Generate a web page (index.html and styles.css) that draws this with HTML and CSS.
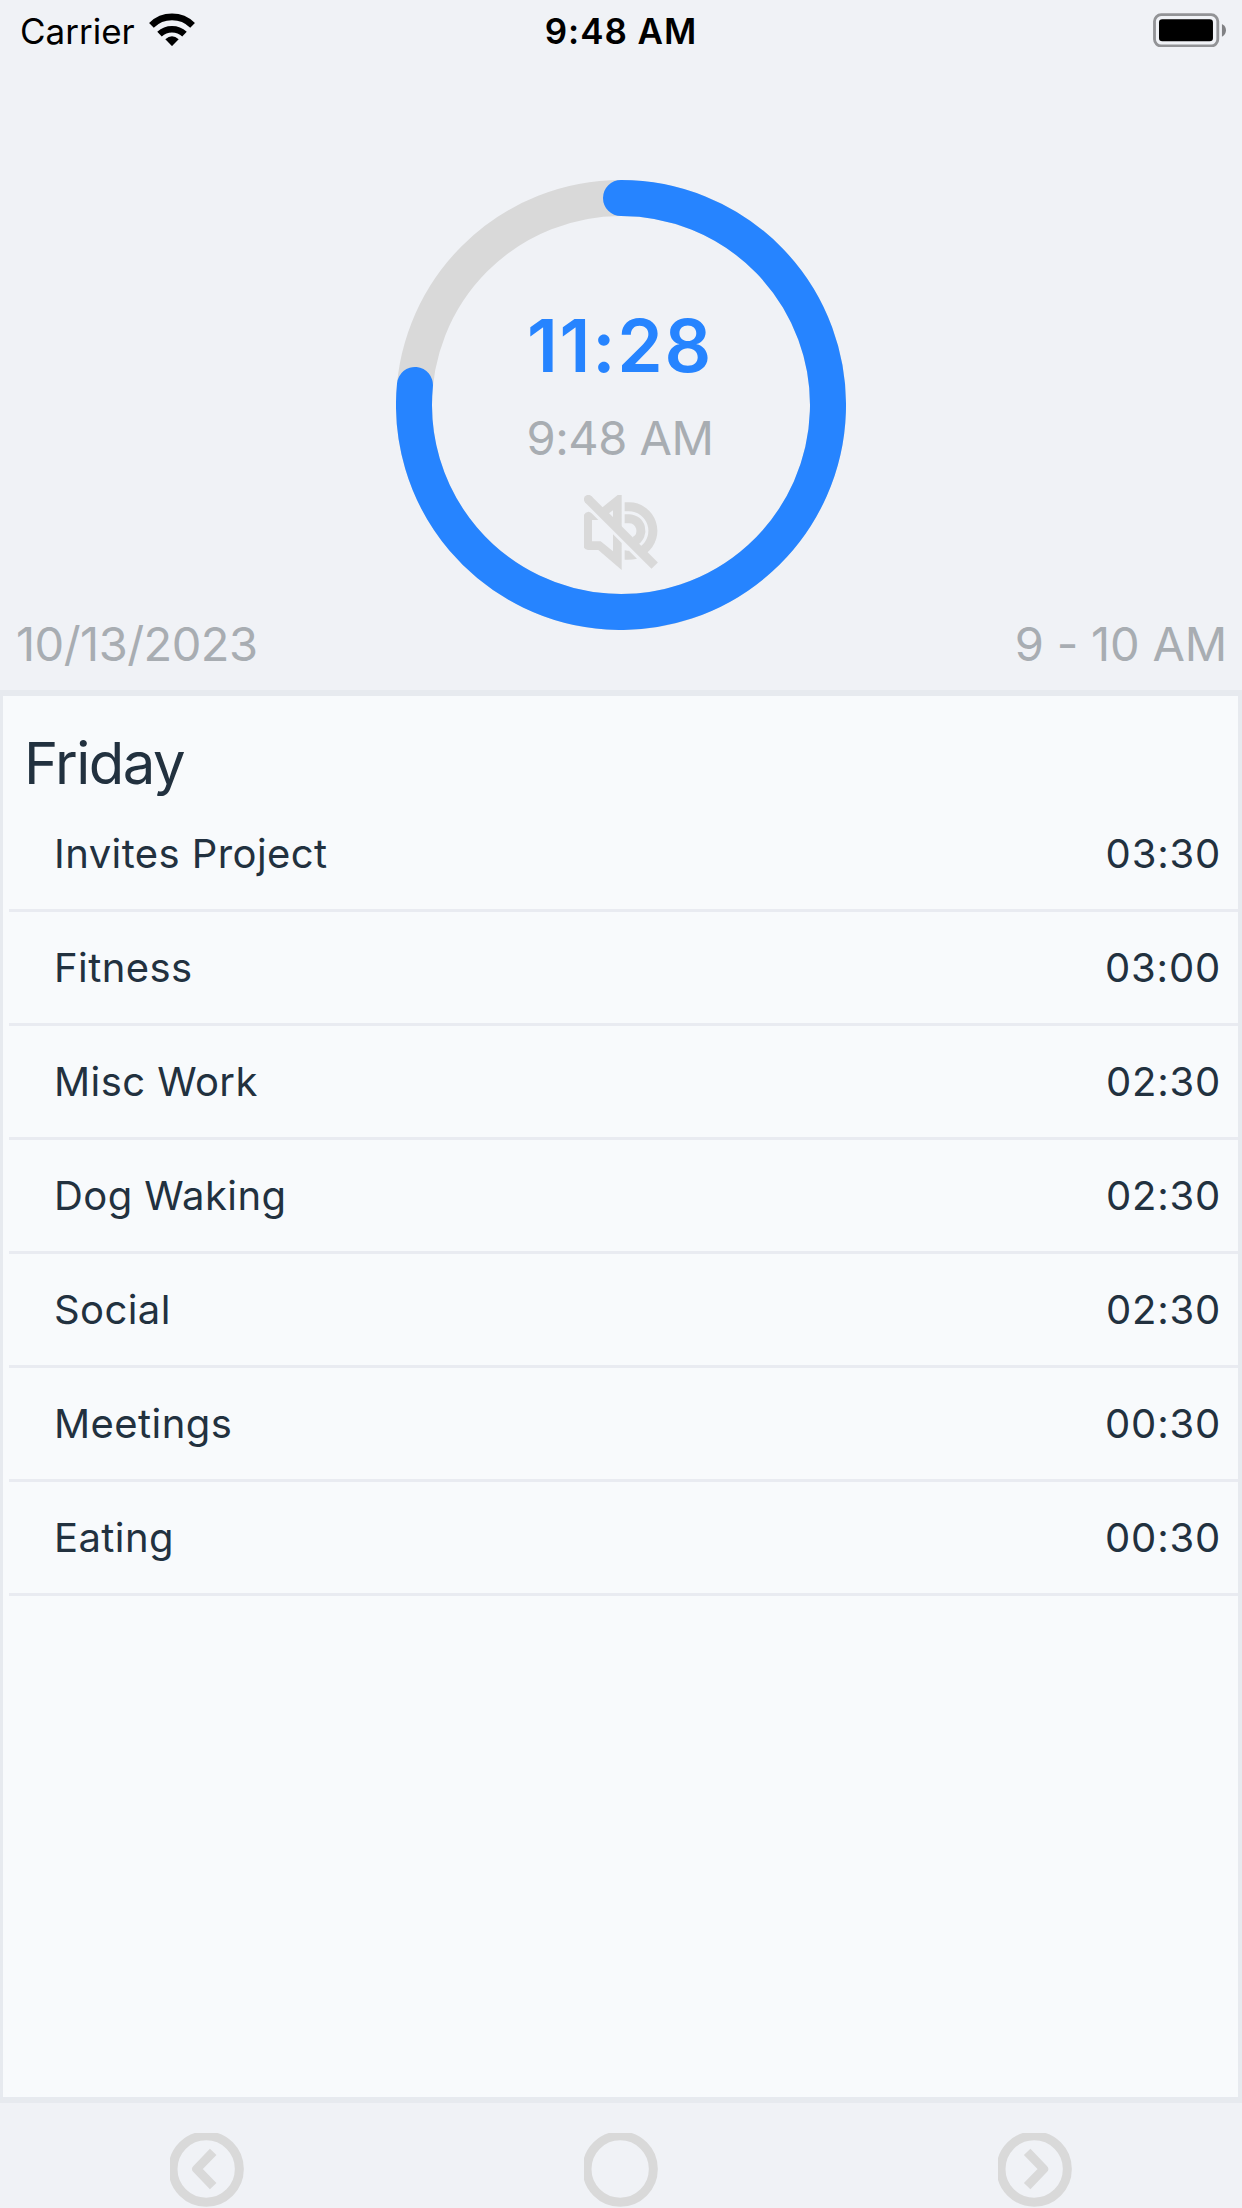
FILE: index.html
```
<!DOCTYPE html>
<html lang="en">
<head>
<meta charset="utf-8">
<title>Day Timer</title>
<link rel="stylesheet" href="styles.css">
</head>
<body>
<div class="app">
  <div class="status">
    <div class="status-left">
      <span class="carrier">Carrier</span>
      <svg class="wifi" viewBox="447 38 138 100" fill="none" stroke="#000" stroke-width="20">
        <path d="M454.200 75.200A88 88 0 0 1 577.800 75.200"/>
        <path d="M478.500 101.500A55.500 55.500 0 0 1 553.500 101.500"/>
        <path d="M496 117Q516 98 536 117L516 137.500Z" fill="#000" stroke="none"/>
      </svg>
    </div>
    <span class="status-time">9:48 AM</span>
    <div class="status-right">
      <svg class="battery" viewBox="69 38 220 104">
        <rect x="73.500" y="43" width="190" height="94" rx="20" fill="none" stroke="#929396" stroke-width="8.500"/>
        <rect x="87" y="57" width="162" height="66" rx="10" fill="#000"/>
        <path d="M276 71Q288 77 288 90T276 109Z" fill="#808184"/>
      </svg>
    </div>
  </div>

  <header class="summary">
    <div class="dial">
      <svg class="ring" viewBox="0 0 450 450" fill="none" stroke-width="36">
        <circle cx="225" cy="225" r="207" stroke="#d9d9d9"/>
        <path d="M225 18A207 207 0 1 1 18.970 205" stroke="#2684ff" stroke-linecap="round"/>
      </svg>
      <div class="dial-content">
        <div class="countdown">11:28</div>
        <div class="clock">9:48 AM</div>
        <svg class="mute" viewBox="612 1005 222 225">
          <path fill="#d9d9d9" fill-rule="evenodd" d="M660 1048L713 1005H725V1112L690 1090ZM687 1060L699 1051V1072Z"/>
          <path fill="#d9d9d9" d="M612 1064Q616 1056 625 1055Q631 1055 635 1060L655 1080H636V1144H662L699 1174V1123L725 1149V1230L655 1170H624Q616 1168 612 1163Z"/>
          <g fill="none" stroke="#d9d9d9" stroke-width="27">
            <path d="M734 1040.500H747A72 72 0 0 1 790.600 1169.500"/>
            <path d="M734 1076H747A36 36 0 0 1 765 1143"/>
            <path d="M625 1018L824 1217" stroke-linecap="butt"/>
          </g>
          <circle cx="625" cy="1018" r="13.500" fill="#d9d9d9"/>
          <path fill="#d9d9d9" d="M734 1171Q741 1173 747 1172L771 1196Q757 1200 734 1199Z"/>
        </svg>
      </div>
    </div>
    <div class="meta">
      <span class="date">10/13/2023</span>
      <span class="range">9 - 10 AM</span>
    </div>
  </header>

  <main class="log">
    <h1 class="day">Friday</h1>
    <ul class="entries">
      <li class="entry"><span>Invites Project</span><span class="time">03:30</span></li>
      <li class="entry"><span>Fitness</span><span class="time">03:00</span></li>
      <li class="entry"><span>Misc Work</span><span class="time">02:30</span></li>
      <li class="entry"><span>Dog Waking</span><span class="time">02:30</span></li>
      <li class="entry"><span>Social</span><span class="time">02:30</span></li>
      <li class="entry"><span>Meetings</span><span class="time">00:30</span></li>
      <li class="entry"><span>Eating</span><span class="time">00:30</span></li>
    </ul>
  </main>

  <nav class="tabs">
    <svg class="tab-icon" viewBox="72 159 222 222">
      <circle cx="180.500" cy="267" r="99.500"/>
      <path d="M201.500 215.500L152 267L201.500 318.500"/>
    </svg>
    <svg class="tab-icon" viewBox="72 159 222 222">
      <circle cx="180.500" cy="267" r="99.500"/>
    </svg>
    <svg class="tab-icon" viewBox="72 159 222 222">
      <circle cx="180.500" cy="267" r="99.500"/>
      <path d="M159.500 215.500L209 267L159.500 318.500"/>
    </svg>
  </nav>
</div>
</body>
</html>
```
FILE: styles.css
```
* {
  box-sizing: border-box;
}

body {
  margin: 0;
  background: #f0f2f6;
  font-family: Inter, "Liberation Sans", sans-serif;
  color: #22313f;
}

.app {
  display: flex;
  flex-direction: column;
  height: 2208px;
  overflow: hidden;
}

/* Status bar */
.status {
  display: grid;
  grid-template-columns: 1fr auto 1fr;
  height: 62px;
  padding: 0 16px 0 20px;
  color: #000;
  font-size: 35px;
  line-height: 62px;
}

.status-left {
  display: flex;
  gap: 14px;
}

.wifi {
  width: 46px;
  height: 33.3px;
  margin-top: 12.7px;
}

.status-time {
  margin-right: 4px;
  font-weight: 560;
  letter-spacing: 0.95px;
}

.status-right {
  display: flex;
  justify-content: flex-end;
}

.battery {
  width: 73.3px;
  height: 34.7px;
  margin-top: 12.7px;
}

/* Dial and date line */
.summary {
  display: flex;
  flex-direction: column;
  align-items: center;
  height: 628px;
  padding-top: 118px;
}

.dial {
  display: grid;
  width: 450px;
  height: 450px;
}

.ring,
.dial-content {
  grid-area: 1 / 1;
  width: 450px;
  height: 450px;
}

.dial-content {
  display: flex;
  flex-direction: column;
  align-items: center;
  padding-top: 125px;
}

.countdown {
  margin-right: 2px;
  color: #2684ff;
  font-size: 73px;
  font-weight: 560;
  line-height: 81px;
  letter-spacing: 1.8px;
}

.clock {
  margin-top: 22px;
  margin-right: 2px;
  color: #a8adb2;
  font-size: 47px;
  line-height: 60px;
  letter-spacing: -0.46px;
}

.mute {
  width: 74px;
  height: 75px;
  margin-top: 27px;
}

.meta {
  display: flex;
  justify-content: space-between;
  align-self: stretch;
  margin-top: -16px;
  padding: 0 15px 0 16px;
  color: #a8adb2;
  font-size: 47px;
  line-height: 60px;
}

.date {
  letter-spacing: -0.53px;
}

.range {
  letter-spacing: -0.2px;
}

/* Activity log */
.log {
  height: 1413px;
  border: solid #e7eaef;
  border-width: 6px 4px 6px 3px;
  background: #f8fafc;
}

.day {
  margin: 0;
  padding: 32px 21px 0;
  font-size: 58px;
  font-weight: 400;
  line-height: 70px;
  letter-spacing: -1.5px;
}

.entries {
  margin: 0 0 0 6px;
  padding: 0;
  list-style: none;
}

.entry {
  display: flex;
  justify-content: space-between;
  height: 114px;
  padding: 0 17px 0 45px;
  border-bottom: 3px solid #e9ebf1;
  font-size: 40px;
  line-height: 111px;
  letter-spacing: 0.42px;
}

.time {
  letter-spacing: 0.8px;
}

/* Bottom navigation */
.tabs {
  display: grid;
  grid-template-columns: repeat(3, 1fr);
  justify-items: center;
  padding-top: 30px;
}

.tab-icon {
  width: 74px;
  height: 74px;
  fill: none;
  stroke: #d9d9d9;
  stroke-width: 27px;
  stroke-linejoin: round;
}
```
